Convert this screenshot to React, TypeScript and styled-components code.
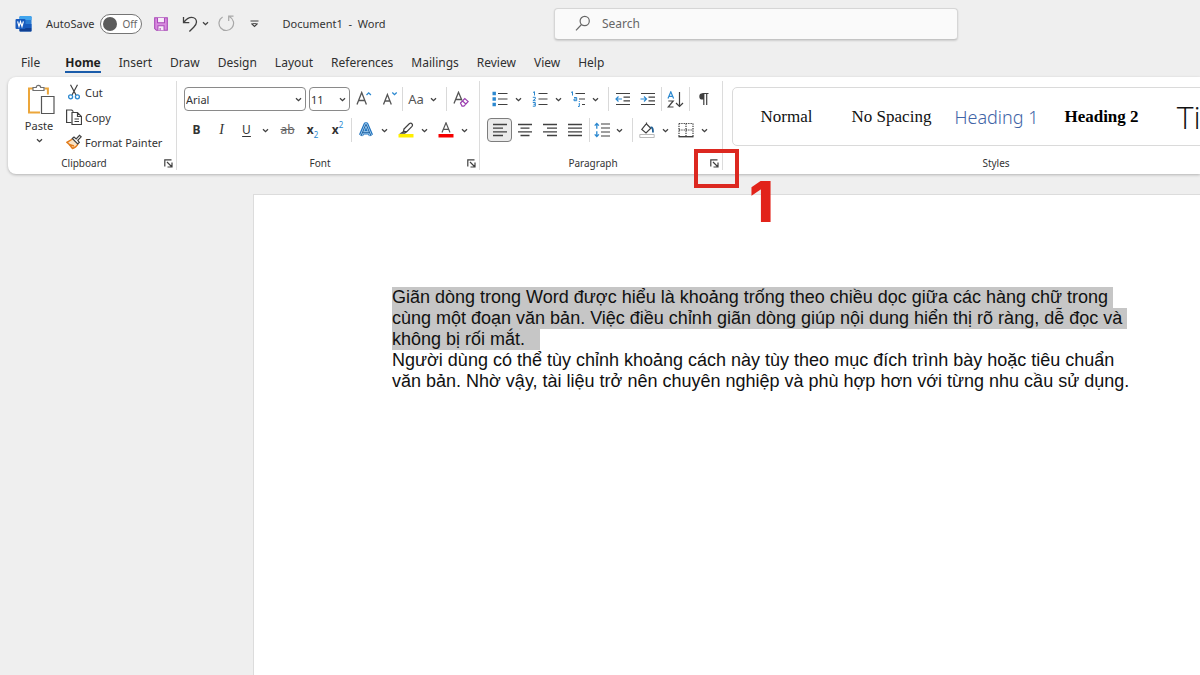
import React from "react";
import styled, { createGlobalStyle, css } from "styled-components";

const GlobalStyle = createGlobalStyle`
  *, *::before, *::after { box-sizing: border-box; }
  html, body { margin: 0; padding: 0; background: #efefef; }
  body { font-family: "Noto Sans", "Open Sans", sans-serif; font-size: 12px; color: #333; }
  button, select, input { font: inherit; color: inherit; }
`;

const INK = "#404040";
const BLUE = "#2b88d0";

const AppWindow = styled.div`
  min-height: 100vh;
  display: flex;
  flex-direction: column;
  overflow: hidden;
  background: #efefef;
`;

const TitleBar = styled.header`
  display: flex;
  align-items: center;
  height: 47px;
`;

const QuickAccess = styled.div`
  flex: 0 0 554px;
  display: flex;
  align-items: center;
  padding-left: 15px;
  font-size: 11px;
`;

const AutoSave = styled.label`
  display: flex;
  align-items: center;
  gap: 6px;
  margin: 0 11px 0 14px;
`;

const Toggle = styled.span`
  display: flex;
  align-items: center;
  gap: 5px;
  width: 42px;
  height: 20px;
  padding-left: 2px;
  border: 1px solid #757575;
  border-radius: 10px;
  background: #fff;
  color: #666;
  font-size: 10px;
  line-height: 18px;
`;

const ToggleInput = styled.input`
  appearance: none;
  width: 14px;
  height: 14px;
  margin: 0;
  border-radius: 50%;
  background: #5c5c5c;
`;

const QuickButtons = styled.div`
  display: flex;
  align-items: center;
`;

const DocTitle = styled.span`
  margin-left: 13px;
  white-space: pre;
`;

const SearchBox = styled.label`
  flex: 0 1 404px;
  display: flex;
  align-items: center;
  gap: 10px;
  height: 32px;
  padding: 0 20px;
  border: 1px solid #d6d6d6;
  border-bottom-color: #c4c4c4;
  border-radius: 4px;
  background: #fafafa;
  box-shadow: 0 1px 2px rgba(0, 0, 0, 0.14);
`;

const SearchInput = styled.input`
  flex: 1;
  min-width: 0;
  border: 0;
  padding: 0;
  outline: 0;
  background: transparent;
  &::placeholder { color: #666; opacity: 1; }
`;

const TabBar = styled.nav`
  display: flex;
  gap: 18px;
  height: 30px;
  padding: 5px 21px 0;
`;

const Tab = styled.a<{ $active?: boolean }>`
  height: 22px;
  line-height: 21px;
  color: #303030;
  text-decoration: none;
  border-bottom: 2px solid transparent;
  &:first-child { margin-right: 7px; }
  ${(p) => p.$active && css`
    height: 21px;
    color: #1f1f1f;
    font-weight: 700;
    border-bottom-color: #1b5caa;
  `}
`;

const Ribbon = styled.section`
  position: relative;
  z-index: 1;
  display: flex;
  height: 97px;
  margin-left: 8px;
  padding: 4px 0;
  border-radius: 8px 0 0 8px;
  background: #fff;
  box-shadow: 0 1px 3px rgba(0, 0, 0, 0.25);
`;

const Group = styled.div<{ $w: number }>`
  flex: 0 0 ${(p) => p.$w}px;
  display: flex;
  flex-direction: column;
  border-right: 1px solid #dcdcdc;
`;

const StylesGroup = styled(Group)`
  flex: 1 0 546px;
  border-right: 0;
`;

const GroupBody = styled.div`
  padding: 6px 0 0 7px;
`;

const GroupFooter = styled.div`
  display: flex;
  align-items: center;
  height: 14px;
  margin-top: auto;
  font-size: 10px;
`;

const GroupLabel = styled.span`
  flex: 1;
  text-align: center;
  line-height: 14px;
`;

const LauncherSlot = styled.span`
  position: relative;
  display: flex;
  width: 16px;
  padding-left: 4px;
`;

const Row = styled.div`
  display: flex;
  align-items: center;
  height: 24px;
  margin-bottom: 7px;
  &:last-child { margin-bottom: 0; }
`;

const IconButton = styled.button<{ $w?: number; $pressed?: boolean }>`
  flex: none;
  display: flex;
  align-items: center;
  justify-content: center;
  width: ${(p) => p.$w ?? 25}px;
  height: 24px;
  padding: 0;
  border: 1px solid ${(p) => (p.$pressed ? "#7d7d7d" : "transparent")};
  border-radius: 4px;
  background: ${(p) => (p.$pressed ? "#ebebeb" : "transparent")};
`;

const LauncherButton = styled(IconButton)`
  width: 9px;
  height: 14px;
  border: 0;
`;

const Split = styled.span<{ $after?: number }>`
  display: flex;
  margin-right: ${(p) => p.$after ?? 3}px;
`;

const Separator = styled.span<{ $before?: number; $after?: number }>`
  flex: none;
  width: 1px;
  height: 24px;
  margin: 0 ${(p) => p.$after ?? 1}px 0 ${(p) => p.$before ?? 1}px;
  background: #d9d9d9;
`;

const ClipboardBody = styled(GroupBody)`
  display: flex;
  gap: 8px;
  padding: 3px 0 0 14px;
`;

const PasteButton = styled.button`
  display: flex;
  flex-direction: column;
  align-items: center;
  width: 34px;
  height: 68px;
  padding: 0;
  border: 0;
  background: transparent;
  font-size: 11px;
  line-height: 16px;
`;

const PasteLabel = styled.span`
  margin: 3px 0 4px;
`;

const ClipboardList = styled.div`
  display: flex;
  flex-direction: column;
  gap: 1px;
  margin-top: -4px;
`;

const ClipboardItem = styled.button`
  display: flex;
  align-items: center;
  gap: 3px;
  height: 24px;
  padding: 0 0 0 2px;
  border: 0;
  background: transparent;
  font-size: 11px;
  white-space: nowrap;
`;

const SelectWrap = styled.span<{ $w: number; $after: number }>`
  display: grid;
  grid-template-columns: 1fr 9px;
  align-items: center;
  width: ${(p) => p.$w}px;
  height: 24px;
  padding-right: 1px;
  margin-right: ${(p) => p.$after}px;
  border: 1px solid #8a8a8a;
  border-radius: 4px;
  > select { grid-area: 1 / 1 / 2 / 3; }
  > svg { grid-area: 1 / 2; pointer-events: none; }
`;

const RibbonSelect = styled.select`
  appearance: none;
  width: 100%;
  height: 22px;
  padding: 0 0 0 1px;
  border: 0;
  background: transparent;
  font-size: 11px;
`;

type GlyphKind = "plain" | "bold" | "italic" | "underline" | "strike";

const glyphStyles = {
  plain: css`font-size: 13px; color: #555;`,
  bold: css`font-weight: 700;`,
  italic: css`font-family: "Liberation Serif", serif; font-size: 14px; font-style: italic;`,
  underline: css`text-decoration: underline; text-underline-offset: 2px;`,
  strike: css`text-decoration: line-through; color: #666;`,
};

const Glyph = styled.span<{ $kind: GlyphKind }>`
  font-size: 12px;
  line-height: 16px;
  ${(p) => glyphStyles[p.$kind]}
`;

const Script = styled.span<{ $up?: boolean }>`
  align-self: ${(p) => (p.$up ? "flex-start" : "flex-end")};
  color: ${BLUE};
  font-size: 8px;
  line-height: 12px;
`;

const Gallery = styled.div`
  display: flex;
  height: 59px;
  margin: 6px 0 0 9px;
  padding-left: 1px;
  border: 1px solid #dadada;
  border-radius: 5px;
`;

type StyleKind = "serif" | "heading" | "bold" | "title";

const styleFaces = {
  serif: css`font-family: "Liberation Serif", serif; font-size: 17px; color: #111;`,
  heading: css`font-family: "Noto Sans", sans-serif; font-weight: 300; font-size: 18px; color: #3f64a6;`,
  bold: css`font-family: "Liberation Serif", serif; font-size: 17px; font-weight: 700; color: #000;`,
  title: css`font-family: "Open Sans", sans-serif; font-weight: 300; font-size: 32px; color: #111;`,
};

const StyleTile = styled.button<{ $kind: StyleKind }>`
  flex: 0 0 105px;
  padding: 0;
  border: 0;
  background: transparent;
  white-space: nowrap;
  ${(p) => styleFaces[p.$kind]}
`;

const Highlight = styled.span`
  position: absolute;
  top: -7px;
  left: -12px;
  width: 45px;
  height: 39px;
  border: 4px solid #dc2820;
`;

const StepNumber = styled.span`
  position: absolute;
  top: 16px;
  left: 43px;
  color: #e2231a;
  font-family: Inter, sans-serif;
  font-size: 56px;
  font-weight: 800;
  line-height: 60px;
`;

const Workspace = styled.main`
  flex: 1;
  display: flex;
  padding: 20px 0 0 253px;
`;

const Paper = styled.article`
  flex: 1;
  padding: 92px 64px 40px 138px;
  border: 1px solid #dcdcdc;
  border-width: 1px 0 0 1px;
  background: #fff;
  color: #111;
  font-family: "Liberation Sans", Arial, sans-serif;
  font-size: 18px;
  line-height: 21px;
`;

const Paragraph = styled.p`
  margin: 0;
  white-space: pre;
`;

const Selected = styled.mark`
  color: inherit;
  background: #c6c6c6;
  padding-bottom: 1px;
`;

/* ---------- icons ---------- */

const Svg = ({ w = 16, h = 16, children }: { w?: number; h?: number; children: React.ReactNode }) => (
  <svg width={w} height={h} viewBox={`0 0 ${w} ${h}`} fill="none" stroke={INK} strokeWidth="1.2" aria-hidden="true">
    {children}
  </svg>
);

const Chevron = () => (
  <Svg w={7} h={5}><path d="M1 1.2 3.5 3.7 6 1.2" strokeWidth="1.3" /></Svg>
);

const WordLogo = () => (
  <Svg w={17} h={16}>
    <g stroke="none">
      <rect x="4.5" y="0" width="12" height="15.6" rx="1.2" fill="#2b7cd3" />
      <path d="M5.7 0h9.6a1.2 1.2 0 0 1 1.2 1.2V4h-12V1.2A1.2 1.2 0 0 1 5.7 0Z" fill="#41a5ee" />
      <path d="M4.5 8h12v4h-12Z" fill="#185abd" />
      <path d="M4.5 12h12v2.4a1.2 1.2 0 0 1-1.2 1.2H5.7a1.2 1.2 0 0 1-1.2-1.2Z" fill="#103f91" />
      <rect x="0.5" y="3" width="10" height="10" rx="1" fill="#185abd" />
    </g>
    <path d="M2.6 5.4 4 10.4 5.5 5.7 7 10.4 8.4 5.4" stroke="#fff" strokeWidth="1.2" />
  </Svg>
);

const SaveIcon = () => (
  <Svg>
    <path d="M.8.8h14.4v14.4H2.8l-2-2Z" fill="#d98be0" stroke="#a94bb8" strokeWidth="1.3" />
    <path d="M4 1v5.500h8V1" fill="#f7ecf8" stroke="#a94bb8" />
    <path d="M4.500 15v-5h7v5M7 12.500V15" fill="#f7ecf8" stroke="#a94bb8" />
  </Svg>
);

const UndoIcon = () => (
  <Svg><path d="M1.5 1v5.700h5.800M1.700 6.500C4 3.300 6.700 1.300 9.700 1.300c2.800 0 4.800 2 4.800 4.700 0 2.200-1.200 3.600-2.800 5.200L7.400 15.500" strokeWidth="1.300" /></Svg>
);

const RedoIcon = () => (
  <Svg w={17} h={17}><path d="M4.600 1.900A7.300 7.300 0 1 0 11.600 1.700M10.700 6V1.200H15.500" stroke="#a8a8a8" /></Svg>
);

const CustomizeIcon = () => (
  <Svg w={9} h={8}><path d="M.5 1h8M1.500 3.500 4.500 6.500 7.500 3.500" /><path d="M2.500 3.600h4" strokeWidth=".9" /></Svg>
);

const SearchIcon = () => (
  <Svg w={17} h={17}><circle cx="9.700" cy="6" r="4.600" stroke="#666" /><path d="M6.500 9.500 1 15.300" stroke="#666" /></Svg>
);

const PasteIcon = () => (
  <Svg w={32} h={31}>
    <path d="M10.500 4.500H6v24h11M21.500 4.500h3.400v6" stroke="#eca63a" strokeWidth="2" />
    <path d="M10 6.500v-3h3.300a2.200 2.200 0 0 1 4.400 0h3.300v3Z" fill="#fff" stroke="#707070" />
    <path d="M18.500 12.500h12.500V29.500H18.500Z" fill="#fff" stroke="#555" />
  </Svg>
);

const CutIcon = () => (
  <Svg>
    <path d="M4.500.8 10 11M11.500.8 6 11" />
    <circle cx="4.600" cy="12.800" r="2" stroke={BLUE} strokeWidth="1.300" />
    <circle cx="11.400" cy="12.800" r="2" stroke={BLUE} strokeWidth="1.300" />
  </Svg>
);

const CopyIcon = () => (
  <Svg>
    <path d="M5.500 13.500H.6V1h5.200l1.600 1.600" />
    <path d="M6 3.500h5.500l4 4v8H6ZM11.500 3.500v4h4M8.500 10h4.500M8.500 12.500h4.500" />
  </Svg>
);

const PainterIcon = () => (
  <Svg>
    <path d="M6.500 5 1 8.300c2 1.300 3.500 3.200 5.500 6.200 2.400-.6 4-1.800 5.500-4.500" fill="#fbe3c3" stroke="#e27b1a" strokeWidth="1.400" />
    <path d="M3 10.500 8 12" stroke="#e27b1a" strokeWidth="1.400" />
    <path d="m6.300 4.500 1.700-1.500 2.200 2 3.300-3.700 1.700 1.500-3.400 3.600 1.500 2-1.600 1.600Z" fill="#fff" />
  </Svg>
);

const LauncherIcon = () => (
  <Svg w={9} h={9}><path d="M.8 7.500V.8h6.700M3 3l4.500 4.500M8 3.500V8H3.500" /></Svg>
);

const SizeIcon = ({ up }: { up?: boolean }) => (
  <Svg w={18} h={16}>
    {up
      ? <path d="M2 13.500 6.700 1.500l4.700 12M3.700 9.500h6" stroke="#555" strokeWidth="1.300" />
      : <path d="M3.500 13.500 7.400 3.500l3.900 10M4.900 10h5" stroke="#555" strokeWidth="1.300" />}
    <path d={up ? "M11.500 4 13.700 1.800l2.200 2.200" : "M12.300 1.500l2.200 2.200L16.700 1.500"} stroke={BLUE} strokeWidth="1.300" />
  </Svg>
);

const ClearIcon = () => (
  <Svg>
    <path d="M1 12.500 5.500 1.300l3.500 8.200M2.500 8.500h5.500" stroke="#555" strokeWidth="1.300" />
    <path d="m7.500 12 4.300-4.500 3.400 3-4.300 4.600H9Z M9.500 10l3.400 3" fill="#fff" stroke="#9b3fb0" />
  </Svg>
);

const EffectsIcon = () => (
  <Svg>
    <path d="M3 13.300 7.700 2.500h.6L13 13.300M5 10.300h6" stroke="#1f72bf" strokeWidth="4.400" strokeLinejoin="round" />
    <path d="M3 14 7.800 2.500h.4L13 14M5 10.300h6" stroke="#a9d4f4" strokeWidth="2.400" />
    <path d="M3 14 7.800 2.500h.4L13 14M5 10.300h6" stroke="#1f5f9f" strokeWidth="1" />
  </Svg>
);

const HighlightIcon = () => (
  <Svg>
    <path d="m6 7 5.500-5.500q1.500-1 2.500.3t0 2.500L8.800 9.700H5.700ZM6 7l-.6 2.700-2.200 1.500h3.500l2-1.500" fill="#fff" />
    <path d="M.5 12h15v3.500H.5Z" fill="#ffee00" stroke="none" />
  </Svg>
);

const FontColorIcon = () => (
  <Svg>
    <path d="M4 10.500 8 .8l4 9.700M5.300 7.300h5.400" stroke="#555" />
    <path d="M.5 12h15v3.500H.5Z" fill="#f50000" stroke="none" />
  </Svg>
);

const BulletsIcon = () => (
  <Svg>
    <path d="M6 2.500h9.500M6 8h9.500M6 13.500h9.500" />
    <path d="M.5.8h3.400v3.400H.5ZM.5 6.300h3.400v3.400H.5ZM.5 11.800h3.400v3.400H.5Z" fill={BLUE} stroke="none" />
  </Svg>
);

const NumberingIcon = () => (
  <Svg>
    <path d="M6.500 2.500h9M6.500 8h9M6.500 13.500h9" />
    <path d="M1 1.500 2.500.7v3.800M.8 6.300h2.500v1.600L.9 9.700h2.700M.8 11.500h2.500v3.700H.8M1.500 13.300h1.800" stroke={BLUE} strokeWidth="1" />
  </Svg>
);

const MultilevelIcon = () => (
  <Svg>
    <path d="M5.500 2.500H15M9 8h6M12 13.500h3" />
    <path d="M1 1.500 2.500.7v3.800M4 6.500h2.700v3.200H4V8h2.500M9.300 12v3.500H8M9.300 10v1" stroke={BLUE} strokeWidth="1" />
  </Svg>
);

const IndentIcon = ({ out }: { out?: boolean }) => (
  <Svg>
    <path d="M1 2.500h14M8.500 6.200H15M8.500 9.800H15M1 13.500h14" />
    <path d={out ? "M7 8H1M3.500 5.500 1 8l2.500 2.500" : "M.5 8h6M4 5.500 6.500 8 4 10.500"} stroke={BLUE} />
  </Svg>
);

const SortIcon = () => (
  <Svg w={17} h={17}>
    <path d="M1 7.500 3.800.8l2.800 6.700M2 5.300h3.600" stroke={BLUE} />
    <path d="M1.300 10h4.900l-5 6h5.300M12.500 1v14.500M9 12l3.500 3.500L16 12" />
  </Svg>
);

const PilcrowIcon = () => (
  <Svg w={11} h={14}>
    <path d="M10.500 1.200H4.500a3.200 3.200 0 0 0 0 6.400H6V1.200Z" fill={INK} stroke="none" />
    <path d="M4.500 1.500h6M5.800 1.500V13M8.700 1.500V13" />
  </Svg>
);

type AlignKind = "left" | "center" | "right" | "justify";
const alignPaths: Record<AlignKind, string> = {
  left: "M1 2.500h14M1 6.200h10M1 9.800h14M1 13.500h10",
  center: "M1 2.500h14M3.500 6.200h9M1 9.800h14M3.500 13.500h9",
  right: "M1 2.500h14M5 6.200h10M1 9.800h14M5 13.500h10",
  justify: "M1 2.500h14M1 6.200h14M1 9.800h14M1 13.500h14",
};

const AlignIcon = ({ kind }: { kind: AlignKind }) => <Svg><path d={alignPaths[kind]} strokeWidth="1.300" /></Svg>;

const SpacingIcon = () => (
  <Svg>
    <path d="M7 2h9M7 6h9M7 10h9M7 14h9" />
    <path d="M2.800 1.500v5.300M.7 3.600l2.100-2.100 2.100 2.100M2.800 9.200v5.300M.7 12.400l2.100 2.100 2.100-2.100" stroke={BLUE} strokeWidth="1.300" />
  </Svg>
);

const ShadingIcon = () => (
  <Svg>
    <path d="M7 2.200 2.800 7.500 7 11l4.800-4.700L7.500 2V.5" />
    <path d="M11.500 5.500c2-.5 2.500 1 2.500 5" stroke="#1f5f95" strokeWidth="1.800" />
    <path d="M.8 12.500h14.400v3H.8Z" fill="#fff" stroke="#aaa" strokeWidth=".8" />
  </Svg>
);

const BordersIcon = () => (
  <Svg>
    <path d="M1 1.500h14M1 1.500v13M15 1.500v13M8 1.500v13M1 8h14" strokeDasharray="1.300 1" />
    <path d="M.5 14.700h15" strokeWidth="1.400" />
  </Svg>
);

/* ---------- composed parts ---------- */

const SplitButton = ({ label, w, after, children }: { label: string; w?: number; after?: number; children: React.ReactNode }) => (
  <Split $after={after}>
    <IconButton $w={w} aria-label={label}>{children}</IconButton>
    <IconButton $w={13} aria-label={`${label} options`}><Chevron /></IconButton>
  </Split>
);

const Footer = ({ label, children }: { label: string; children?: React.ReactNode }) => (
  <GroupFooter>
    <GroupLabel>{label}</GroupLabel>
    <LauncherSlot>
      <LauncherButton aria-label={`${label} settings`}><LauncherIcon /></LauncherButton>
      {children}
    </LauncherSlot>
  </GroupFooter>
);

const tabs = ["File", "Home", "Insert", "Draw", "Design", "Layout", "References", "Mailings", "Review", "View", "Help"];

const galleryStyles: { name: string; kind: StyleKind }[] = [
  { name: "Normal", kind: "serif" },
  { name: "No Spacing", kind: "serif" },
  { name: "Heading 1", kind: "heading" },
  { name: "Heading 2", kind: "bold" },
  { name: "Title", kind: "title" },
];

export default function App() {
  return (
    <AppWindow>
      <GlobalStyle />
      <TitleBar>
        <QuickAccess>
          <WordLogo />
          <AutoSave>
            AutoSave
            <Toggle><ToggleInput type="checkbox" role="switch" />Off</Toggle>
          </AutoSave>
          <QuickButtons>
            <Split $after={12}>
              <IconButton $w={16} aria-label="Save"><SaveIcon /></IconButton>
            </Split>
            <SplitButton label="Undo" w={18} after={2}><UndoIcon /></SplitButton>
            <IconButton aria-label="Redo"><RedoIcon /></IconButton>
            <IconButton $w={30} aria-label="Customize toolbar"><CustomizeIcon /></IconButton>
          </QuickButtons>
          <DocTitle>Document1  -  Word</DocTitle>
        </QuickAccess>
        <SearchBox>
          <SearchIcon />
          <SearchInput type="text" placeholder="Search" aria-label="Search" />
        </SearchBox>
      </TitleBar>

      <TabBar>
        {tabs.map((t) => <Tab key={t} href="#" $active={t === "Home"}>{t}</Tab>)}
      </TabBar>

      <Ribbon>
        <Group $w={169}>
          <ClipboardBody>
            <PasteButton>
              <PasteIcon />
              <PasteLabel>Paste</PasteLabel>
              <Chevron />
            </PasteButton>
            <ClipboardList>
              <ClipboardItem><CutIcon />Cut</ClipboardItem>
              <ClipboardItem><CopyIcon />Copy</ClipboardItem>
              <ClipboardItem><PainterIcon />Format Painter</ClipboardItem>
            </ClipboardList>
          </ClipboardBody>
          <Footer label="Clipboard" />
        </Group>

        <Group $w={303}>
          <GroupBody>
            <Row>
              <SelectWrap $w={122} $after={3}>
                <RibbonSelect aria-label="Font"><option>Arial</option></RibbonSelect>
                <Chevron />
              </SelectWrap>
              <SelectWrap $w={41} $after={1}>
                <RibbonSelect aria-label="Font size"><option>11</option></RibbonSelect>
                <Chevron />
              </SelectWrap>
              <IconButton aria-label="Increase font size"><SizeIcon up /></IconButton>
              <IconButton aria-label="Decrease font size"><SizeIcon /></IconButton>
              <Separator $after={2} />
              <SplitButton label="Change case" w={22} after={5}><Glyph $kind="plain">Aa</Glyph></SplitButton>
              <Separator />
              <IconButton aria-label="Clear formatting"><ClearIcon /></IconButton>
            </Row>
            <Row>
              <IconButton aria-label="Bold"><Glyph $kind="bold">B</Glyph></IconButton>
              <IconButton aria-label="Italic"><Glyph $kind="italic">I</Glyph></IconButton>
              <SplitButton label="Underline"><Glyph $kind="underline">U</Glyph></SplitButton>
              <IconButton aria-label="Strikethrough"><Glyph $kind="strike">ab</Glyph></IconButton>
              <IconButton aria-label="Subscript"><Glyph $kind="bold">x</Glyph><Script>2</Script></IconButton>
              <IconButton aria-label="Superscript"><Glyph $kind="bold">x</Glyph><Script $up>2</Script></IconButton>
              <Separator />
              <SplitButton label="Text effects" after={2}><EffectsIcon /></SplitButton>
              <SplitButton label="Highlight colour" after={2}><HighlightIcon /></SplitButton>
              <SplitButton label="Font colour"><FontColorIcon /></SplitButton>
            </Row>
          </GroupBody>
          <Footer label="Font" />
        </Group>

        <Group $w={243}>
          <GroupBody>
            <Row>
              <SplitButton label="Bullets" after={2}><BulletsIcon /></SplitButton>
              <SplitButton label="Numbering" after={2}><NumberingIcon /></SplitButton>
              <SplitButton label="Multilevel list" w={22} after={5}><MultilevelIcon /></SplitButton>
              <Separator />
              <IconButton aria-label="Decrease indent"><IndentIcon out /></IconButton>
              <IconButton aria-label="Increase indent"><IndentIcon /></IconButton>
              <Separator />
              <IconButton aria-label="Sort"><SortIcon /></IconButton>
              <Separator />
              <IconButton aria-label="Show paragraph marks"><PilcrowIcon /></IconButton>
            </Row>
            <Row>
              <IconButton $pressed aria-label="Align left"><AlignIcon kind="left" /></IconButton>
              <IconButton aria-label="Centre"><AlignIcon kind="center" /></IconButton>
              <IconButton aria-label="Align right"><AlignIcon kind="right" /></IconButton>
              <IconButton aria-label="Justify"><AlignIcon kind="justify" /></IconButton>
              <Separator $before={2} />
              <SplitButton label="Line spacing" w={22} after={5}><SpacingIcon /></SplitButton>
              <Separator />
              <SplitButton label="Shading" after={1}><ShadingIcon /></SplitButton>
              <SplitButton label="Borders"><BordersIcon /></SplitButton>
            </Row>
          </GroupBody>
          <Footer label="Paragraph">
            <Highlight />
            <StepNumber>1</StepNumber>
          </Footer>
        </Group>

        <StylesGroup $w={546}>
          <Gallery>
            {galleryStyles.map((s) => <StyleTile key={s.name} $kind={s.kind}>{s.name}</StyleTile>)}
          </Gallery>
          <GroupFooter><GroupLabel>Styles</GroupLabel></GroupFooter>
        </StylesGroup>
      </Ribbon>

      <Workspace>
        <Paper>
          <Paragraph>
            <Selected>
              {"Giãn dòng trong Word được hiểu là khoảng trống theo chiều dọc giữa các hàng chữ trong \n"}
              {"cùng một đoạn văn bản. Việc điều chỉnh giãn dòng giúp nội dung hiển thị rõ ràng, dễ đọc và \n"}
              {"không bị rối mắt.   "}
            </Selected>
          </Paragraph>
          <Paragraph>
            {"Người dùng có thể tùy chỉnh khoảng cách này tùy theo mục đích trình bày hoặc tiêu chuẩn\n"}
            {"văn bản. Nhờ vậy, tài liệu trở nên chuyên nghiệp và phù hợp hơn với từng nhu cầu sử dụng."}
          </Paragraph>
        </Paper>
      </Workspace>
    </AppWindow>
  );
}
